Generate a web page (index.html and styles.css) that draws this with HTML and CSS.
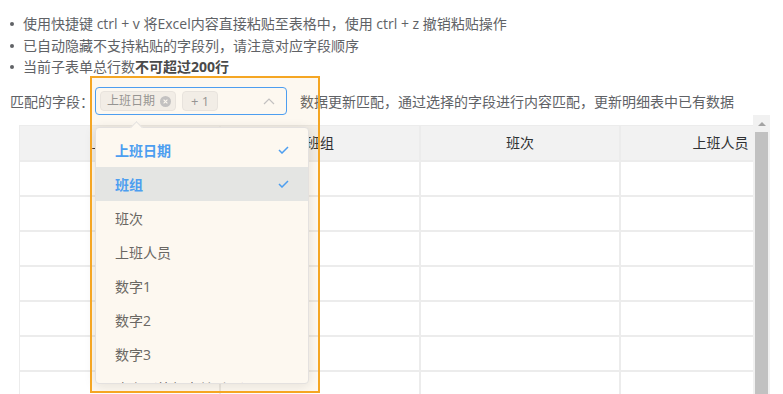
FILE: index.html
```html
<!DOCTYPE html>
<html lang="zh-CN">
<head>
<meta charset="utf-8">
<link rel="stylesheet" href="styles.css">
</head>
<body>
<ul class="notes">
  <li>使用快捷键 ctrl + v 将Excel内容直接粘贴至表格中，使用 ctrl + z 撤销粘贴操作</li>
  <li>已自动隐藏不支持粘贴的字段列，请注意对应字段顺序</li>
  <li>当前子表单总行数<b>不可超过200行</b></li>
</ul>
<div class="match-row">
  <span class="label">匹配的字段：</span>
  <div class="select">
    <div class="select-box">
      <span class="tag">上班日期<svg class="tag-close" width="11" height="11" viewBox="0 0 11 11"><circle cx="5.5" cy="5.5" r="5.5" fill="#c0c4cc"/><path d="M3.6 3.6 L7.4 7.4 M7.4 3.6 L3.6 7.4" stroke="#fff" stroke-width="1.1"/></svg></span>
      <span class="tag">+ 1</span>
      <svg class="arrow" width="12" height="8" viewBox="0 0 12 8"><path d="M1 7 L6 2 L11 7" fill="none" stroke="#c0c4cc" stroke-width="1.2"/></svg>
    </div>
    <div class="dropdown">
      <div class="popper-arrow"></div>
      <div class="options">
        <div class="option selected">上班日期<svg class="check" width="11" height="8" viewBox="0 0 11 8"><path d="M1 4 L4 7 L10 1" fill="none" stroke="#409eff" stroke-width="1.5"/></svg></div>
        <div class="option selected hover">班组<svg class="check" width="11" height="8" viewBox="0 0 11 8"><path d="M1 4 L4 7 L10 1" fill="none" stroke="#409eff" stroke-width="1.5"/></svg></div>
        <div class="option">班次</div>
        <div class="option">上班人员</div>
        <div class="option">数字1</div>
        <div class="option">数字2</div>
        <div class="option">数字3</div>
        <div class="option">班次（外部表单引用）</div>
      </div>
    </div>
  </div>
  <span class="hint">数据更新匹配，通过选择的字段进行内容匹配，更新明细表中已有数据</span>
</div>
<div class="table-area">
  <div class="table-view">
    <div class="grid">
      <div class="cell head">上班日期</div>
      <div class="cell head">班组</div>
      <div class="cell head">班次</div>
      <div class="cell head">上班人员</div>
      <div class="cell"></div><div class="cell"></div><div class="cell"></div><div class="cell"></div>
      <div class="cell"></div><div class="cell"></div><div class="cell"></div><div class="cell"></div>
      <div class="cell"></div><div class="cell"></div><div class="cell"></div><div class="cell"></div>
      <div class="cell"></div><div class="cell"></div><div class="cell"></div><div class="cell"></div>
      <div class="cell"></div><div class="cell"></div><div class="cell"></div><div class="cell"></div>
      <div class="cell"></div><div class="cell"></div><div class="cell"></div><div class="cell"></div>
      <div class="cell"></div><div class="cell"></div><div class="cell"></div><div class="cell"></div>
    </div>
  </div>
  <div class="scrollbar">
    <div class="scroll-up"><span class="tri"></span></div>
    <div class="thumb"></div>
  </div>
</div>
<div class="highlight"></div>
</body>
</html>
```
FILE: styles.css
```css
html, body {
  margin: 0;
  padding: 0;
}
body {
  width: 783px;
  height: 394px;
  overflow: hidden;
  position: relative;
  background: #fff;
  font-family: "Open Sans", "Noto Sans CJK SC", sans-serif;
  font-size: 14px;
  color: #606266;
}
.notes {
  list-style: none;
  margin: 0;
  padding: 13px 0 0 23px;
}
.notes li {
  position: relative;
  line-height: 21.5px;
  height: 21.5px;
  white-space: nowrap;
}
.notes li::before {
  content: "";
  position: absolute;
  left: -13px;
  top: 9px;
  width: 4px;
  height: 4px;
  border-radius: 50%;
  background: #606266;
}
.notes b {
  font-weight: 700;
  color: #4a4a4a;
}
.match-row {
  display: flex;
  align-items: center;
  margin-top: 9.5px;
  padding-left: 10px;
  height: 28px;
}
.label {
  width: 85px;
  white-space: nowrap;
}
.select {
  position: relative;
  width: 192px;
  height: 28px;
}
.select-box {
  box-sizing: border-box;
  height: 28px;
  border: 1px solid #409eff;
  border-radius: 4px;
  display: flex;
  align-items: center;
  padding-left: 4px;
  gap: 6px;
  background: #fff;
}
.tag {
  box-sizing: border-box;
  height: 20px;
  display: inline-flex;
  align-items: center;
  gap: 5px;
  padding: 0 4px 0 6px;
  background: #f4f4f5;
  border: 1px solid #e9e9eb;
  border-radius: 4px;
  color: #909399;
  font-size: 12px;
  line-height: 18px;
}
.tag + .tag {
  padding: 0 8px;
  font-size: 13px;
}
.arrow {
  margin-left: auto;
  margin-right: 11px;
}
.dropdown {
  position: absolute;
  top: 40px;
  left: 0;
  width: 214px;
  height: 257px;
  box-sizing: border-box;
  background: #fff;
  border: 1px solid #e4e7ed;
  border-radius: 4px;
  box-shadow: 0 2px 12px rgba(0, 0, 0, 0.1);
  z-index: 5;
}
.popper-arrow {
  position: absolute;
  top: -5px;
  left: 36px;
  width: 8px;
  height: 8px;
  background: #fff;
  border-left: 1px solid #e4e7ed;
  border-top: 1px solid #e4e7ed;
  transform: rotate(45deg);
}
.options {
  height: 100%;
  overflow: hidden;
  padding-top: 5px;
  box-sizing: border-box;
  border-radius: 4px;
}
.option {
  height: 34px;
  padding: 0 19px 0 19px;
  display: flex;
  align-items: center;
  justify-content: space-between;
  white-space: nowrap;
  color: #606266;
}
.option.selected {
  color: #409eff;
  font-weight: 700;
}
.option.hover {
  background: #e4ebf1;
}
.hint {
  margin-left: 13px;
  white-space: nowrap;
}
.table-area {
  display: flex;
  margin-left: 19px;
  height: 279px;
}
.table-view {
  width: 734px;
  padding-top: 10px;
  overflow: hidden;
}
.grid {
  display: grid;
  grid-template-columns: 201px 200px 200px 201px;
  width: 802px;
}
.cell {
  box-sizing: border-box;
  height: 35px;
  border: 1px solid #ececec;
  background: #fff;
}
.cell.head {
  height: 36px;
  background: #f2f2f2;
  color: #303133;
  display: flex;
  align-items: center;
  justify-content: center;
  line-height: 20px;
}
.scrollbar {
  width: 17px;
  background: #f1f1f1;
}
.scroll-up {
  height: 17px;
  display: flex;
  align-items: center;
  justify-content: center;
}
.tri {
  width: 0;
  height: 0;
  border-left: 4px solid transparent;
  border-right: 4px solid transparent;
  border-bottom: 4px solid #a3a3a3;
}
.thumb {
  margin-left: 2px;
  width: 13px;
  height: 262px;
  background: #c1c1c1;
}
.highlight {
  position: absolute;
  left: 90px;
  top: 76px;
  width: 230px;
  height: 317px;
  box-sizing: border-box;
  border: 2px solid #f5a623;
  background: rgba(230, 162, 60, 0.08);
  pointer-events: none;
  z-index: 10;
}
```
